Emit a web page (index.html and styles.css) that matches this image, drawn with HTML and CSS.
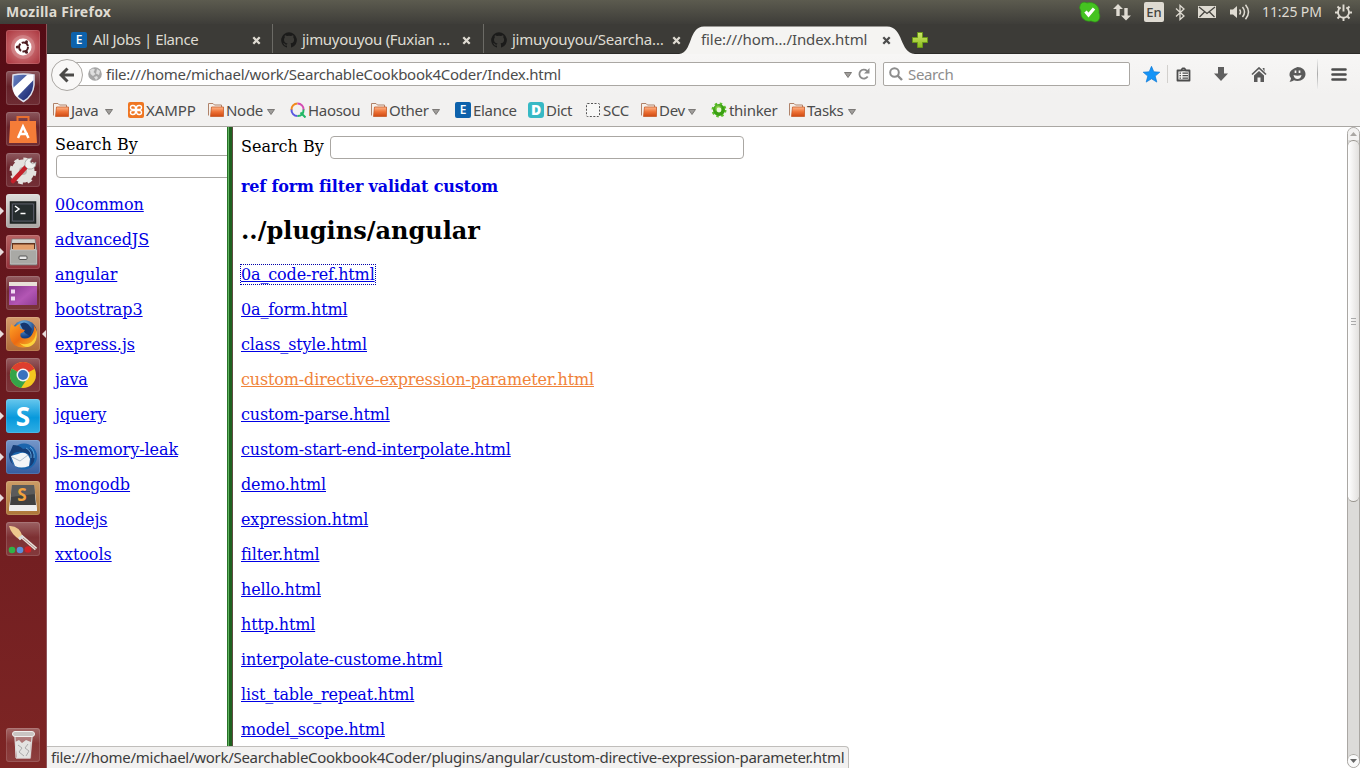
FILE: index.html
```html
<!DOCTYPE html>
<html lang="en">
<head>
<meta charset="utf-8">
<title>Index.html</title>
<link rel="stylesheet" href="styles.css">
</head>
<body>
<svg class="defs" width="0" height="0">
<defs>
<linearGradient id="gOrange" x1="0" y1="0" x2="0" y2="1"><stop offset="0" stop-color="#ffb88c"/><stop offset=".5" stop-color="#ee7236"/><stop offset="1" stop-color="#cf4a12"/></linearGradient>
<linearGradient id="gGreen" x1="0" y1="0" x2="0" y2="1"><stop offset="0" stop-color="#cfe86a"/><stop offset="1" stop-color="#8abb1c"/></linearGradient>
<linearGradient id="gBlue" x1="0" y1="0" x2="1" y2="1"><stop offset="0" stop-color="#6b87c8"/><stop offset="1" stop-color="#131c66"/></linearGradient>
<linearGradient id="gPurple" x1="0" y1="0" x2="1" y2="1"><stop offset="0" stop-color="#7d2f86"/><stop offset=".6" stop-color="#b356b4"/><stop offset="1" stop-color="#8f3c93"/></linearGradient>
<linearGradient id="gSteel" x1="0" y1="0" x2="0" y2="1"><stop offset="0" stop-color="#d8d8d4"/><stop offset="1" stop-color="#8d8d89"/></linearGradient>
<linearGradient id="gFire" x1="0" y1="0" x2="1" y2="1"><stop offset="0" stop-color="#ffa426"/><stop offset=".5" stop-color="#ec6a12"/><stop offset="1" stop-color="#f8c62a"/></linearGradient>
<radialGradient id="gGlobe" cx=".45" cy=".2"><stop offset="0" stop-color="#7cc4f2"/><stop offset="1" stop-color="#123f86"/></radialGradient>
<radialGradient id="gLime" cx=".4" cy=".3"><stop offset="0" stop-color="#b8f06c"/><stop offset="1" stop-color="#3aa012"/></radialGradient>
<symbol id="folder" viewBox="0 0 16 16"><path d="M.5 13.500V1.500H5l1.500 1.500H13.500v10" fill="#f6f1ec" stroke="#b0836a"/><path d="M3.500 5H15.500V14.500H2.500z" fill="url(#gOrange)" stroke="#c65a28" stroke-width=".8"/></symbol>
<symbol id="cat" viewBox="0 0 16 16"><path d="M8 .3a7.800 7.800 0 0 0-2.500 15.200c.4.100.5-.2.500-.4v-1.500c-2.200.5-2.700-.9-2.700-.9-.4-.9-.9-1.200-.9-1.200-.7-.5.100-.5.100-.5.800.100 1.200.8 1.200.8.700 1.200 1.900.9 2.300.7.100-.5.300-.9.500-1.100C4.800 11.200 3 10.500 3 7.500c0-.8.300-1.500.8-2.100-.100-.2-.4-1 .100-2.100 0 0 .7-.2 2.200.8a7.500 7.500 0 0 1 3.900 0c1.500-1 2.200-.8 2.200-.8.4 1.100.200 1.900.100 2.100.5.600.8 1.300.8 2.100 0 3.100-1.900 3.700-3.600 3.900.3.300.5.800.5 1.500v2.200c0 .2.100.5.500.4A7.800 7.800 0 0 0 8 .3z" fill="#1b1b1a"/></symbol>
<symbol id="close" viewBox="0 0 9 9"><path d="M1.300 1.300 7.700 7.700M7.700 1.300 1.300 7.700" stroke="currentColor" stroke-width="2.300"/></symbol>
<symbol id="arrow" viewBox="0 0 8 6"><path d="M.5.500h7L4 5.500z" fill="#a09e9b" stroke="#73716e" stroke-width=".9"/></symbol>
</defs>
</svg>

<header class="panel">
  <span class="panel-title">Mozilla Firefox</span>
  <div class="indicators">
    <svg class="i-skype" width="22" height="22" viewBox="0 0 22 22"><path d="M1 5C1 2 5 0 8 2c8-2 13 4 12 10 2 4 0 9-4 9-2 0-3-1-4-1C6 21 1 17 2 10 1 8 0 7 1 5z" fill="#45c321" stroke="#2c9614" stroke-width=".7"/><path d="M6.500 10.500 9.500 14 15 7.500" fill="none" stroke="#fff" stroke-width="3.200"/></svg>
    <svg class="i-net" width="18" height="17" viewBox="0 0 18 17"><path d="M5 0 10 5H6.700V12H3.300V5H0zM13 16.500 8 11.500h3.300V4h3.400v7.500H18z" fill="#dfdbd2"/></svg>
    <span class="i-lang">En</span>
    <svg class="i-bt" width="10" height="17" viewBox="0 0 10 17"><path d="M1 4.500 9 12 5 15.500V1.500L9 5 1 12.500" fill="none" stroke="#dfdbd2" stroke-width="1.300"/></svg>
    <svg class="i-mail" width="18" height="12" viewBox="0 0 18 12"><path d="M0 0h18v12H0z" fill="#dfdbd2"/><path d="M1 1l8 6.500L17 1M1.500 11 6.500 6M16.500 11l-5-5" fill="none" stroke="#45443f" stroke-width="1.300"/></svg>
    <svg class="i-vol" width="20" height="16" viewBox="0 0 20 16"><path d="M0 5.500h3L7 2v12L3 10.500H0z" fill="#dfdbd2"/><path d="M9.500 5.500q2 2.500 0 5M12.500 3q4 5 0 10M15.500.7q6 7.300 0 14.600" fill="none" stroke="#dfdbd2" stroke-width="1.500"/></svg>
    <span class="clock">11:25 PM</span>
    <svg class="i-gear" width="17" height="17" viewBox="0 0 17 17"><path d="M5.700 3.500a5.500 5.500 0 1 0 5.600 0" fill="none" stroke="#dfdbd2" stroke-width="1.800"/><path d="M8.500.5v7M2.500 2.500 4.500 4.500M14.500 2.500l-2 2M0 8.500h3M14 8.500h3M2.500 14.500l2-2M14.500 14.500l-2-2M8.500 14v3" stroke="#dfdbd2" stroke-width="1.900"/></svg>
  </div>
</header>

<div class="desktop">
<nav class="launcher">
  <div class="tile dash"><svg width="34" height="34" viewBox="0 0 34 34"><circle cx="17" cy="17" r="12" fill="#fff" opacity=".18"/><circle cx="17" cy="17" r="8.500" fill="#fff"/><circle cx="17.500" cy="17" r="4.500" fill="none" stroke="#4d1c20" stroke-width="2" stroke-dasharray="8 1.420"/><g fill="#4d1c20"><circle cx="11.300" cy="17" r="1.500"/><circle cx="20.500" cy="11.700" r="1.500"/><circle cx="20.500" cy="22.300" r="1.500"/></g></svg></div>
  <div class="tile"><svg width="34" height="34" viewBox="0 0 34 34"><path d="M7 4Q17 2 28 4V14Q27 25 17.500 30.500 7 25 6.500 14z" fill="url(#gBlue)" stroke="#dfe2ec" stroke-width="1.500"/><path d="M7 17 21 4h6.500v5L11 26Q7 22 7 17z" fill="#fff"/></svg></div>
  <div class="tile"><svg width="34" height="34" viewBox="0 0 34 34"><path d="M11.500 9V5h11v4" fill="none" stroke="#e96f2f" stroke-width="2"/><path d="M4 9H30V14L31 31H3L4 14z" fill="#f47c38"/><path d="M12 26 17 14.500 22.500 26M13 22h9" fill="none" stroke="#fff" stroke-width="2.500"/></svg></div>
  <div class="tile"><svg width="34" height="34" viewBox="0 0 34 34"><circle cx="17" cy="18" r="9.500" fill="#e4e2df" stroke="#e4e2df" stroke-width="4"/><circle cx="17" cy="18" r="11.700" fill="none" stroke="#e4e2df" stroke-width="3.500" stroke-dasharray="4.600 4.590"/><circle cx="17" cy="18" r="4" fill="#b8b5b1"/><path d="M7 28 20 14" stroke="#c4202a" stroke-width="4.500" stroke-linecap="round"/><path d="M19 13q-1-8 7-8l-2 4 3 2 3-2q0 8-8 7z" fill="#efefed" stroke="#999" stroke-width=".7"/></svg></div>
  <div class="tile light running"><svg width="34" height="34" viewBox="0 0 34 34"><path d="M4.500 8h25v21h-25z" fill="#33393a" stroke="#1c2020" stroke-width="1.500"/><path d="M6.500 10h21v17h-21z" fill="#262d2e" stroke="#667" stroke-width=".7"/><path d="M9 12l4 3-4 3M14.500 19.500h5" fill="none" stroke="#fff" stroke-width="1.500"/></svg></div>
  <div class="tile files running"><svg width="34" height="34" viewBox="0 0 34 34"><path d="M6 4h23l2 12v14H4V16z" fill="url(#gSteel)" stroke="#777" stroke-width=".7"/><path d="M6 8h23v6H6z" fill="#60321e"/><path d="M7 9.500h21v6H7z" fill="#e3a06e"/><path d="M4.500 15h26v14h-26z" fill="#a9a9a5" stroke="#ccc" stroke-width=".6"/><rect x="13" y="21" width="8" height="3.500" rx="1" fill="#e8e8e8" stroke="#555"/></svg></div>
  <div class="tile"><svg width="34" height="34" viewBox="0 0 34 34"><path d="M3 6h28v23H3z" fill="url(#gPurple)"/><path d="M3 6h28v4H3z" fill="#e8e1d9"/><path d="M5 13.500h4v4H5zM5 20.500h4v4H5z" fill="#f1d9f1"/></svg></div>
  <div class="tile fox running focused"><svg width="34" height="34" viewBox="0 0 34 34"><circle cx="18.500" cy="15.500" r="12.300" fill="url(#gGlobe)"/><path d="M14 7q4-3 8 0l4 5-2 7-5-3-3-5z" fill="#15366f"/><path d="M5.500 7q1.500 2.500 4 2.500 2.500-3 5-2.500-2 3 .5 5l4 1q-1 2.500-4.500 3.500-1 5 4.500 5 5 0 7-4 3-5 1.500-9.500 5 5.500 3 12.500Q26.500 30.500 17 30.500 5.500 30 4 20q-1-7 1.500-13z" fill="url(#gFire)"/><path d="M29.500 11q2 9-4 14-6 4-12 1 8 8 15 0 4-6 1-15z" fill="#fbd23c"/></svg></div>
  <div class="tile"><svg width="34" height="34" viewBox="0 0 34 34"><circle cx="17" cy="17" r="13" fill="#f4c81f"/><path d="M17 17 5.700 10.500A13 13 0 0 1 28.500 11z" fill="#dd3e2e"/><path d="M17 17 5.700 10.500A13 13 0 0 0 15 30l6-9z" fill="#35a449"/><circle cx="17" cy="17" r="6.500" fill="#f3f3f3"/><circle cx="17" cy="17" r="5" fill="#3972bf"/></svg></div>
  <div class="tile skype running"><span>S</span></div>
  <div class="tile bird running"><svg width="34" height="34" viewBox="0 0 34 34"><circle cx="18" cy="16.500" r="13" fill="#1b65ad"/><path d="M7 5q6 0 10 4 8-2 11 6 2 8-5 12 4-9-1-13-7-4-14-1Q3 17 7 25q-7-8-2-15z" fill="#163e78"/><path d="M5 16q3-1 7-2 6-3 10 1l2 4-1 7q-8 3-14 0z" fill="#f2f5f8"/><path d="M6 17l8 4 8-6" stroke="#aebdcc" fill="none"/><path d="M20 8q6 3 5 10M24 7q5 4 4 11" stroke="#5ea4dc" fill="none"/></svg></div>
  <div class="tile sublime running"><svg width="34" height="34" viewBox="0 0 34 34"><path d="M6 4h22l3 23v3H3v-3z" fill="#eee"/><path d="M6 4h22l2 20H4z" fill="#414141"/><path d="M6 4h22l1 9-24 3z" fill="#5b5b5b"/><text x="11.300" y="19.500" class="sub-s">S</text></svg></div>
  <div class="tile"><svg width="34" height="34" viewBox="0 0 34 34"><path d="M15 14 30 27" stroke="#e9e1d8" stroke-width="3.500"/><path d="M17 16l13 11" stroke="#a88" stroke-width="1"/><path d="M3 4q10-1 14 11l-3 3Q5 12 3 4z" fill="#edc78d"/><path d="M13 17l4-3" stroke="#d9d9d9" stroke-width="3"/><circle cx="6" cy="28" r="3.300" fill="#31b246"/><circle cx="14" cy="28" r="3.300" fill="#5b8ed8"/><circle cx="22" cy="27.500" r="3.300" fill="#cf2227"/></svg></div>
  <div class="tile trash"><svg width="34" height="34" viewBox="0 0 34 34"><path d="M8 6h19l-2 25H10z" fill="#fff" opacity=".3"/><path d="M9 14l4-2 3 3 4-3 5 2-1 16H11z" fill="#e3e3e1"/><path d="M12 17l4 3-3 4 5 4M22 16l-3 4 4 3-3 5" stroke="#aaa" fill="none"/><rect x="6.500" y="3.500" width="22" height="5" rx="2.500" fill="#c9c4c2" stroke="#f1efee"/><path d="M9 9l1 21h14l2-21" fill="none" stroke="#ddd"/></svg></div>
</nav>

<main class="browser">
  <div class="tabs">
    <div class="tab first"><span class="fav-e">E</span><span class="tab-text all-jobs">All Jobs | Elance</span><svg class="x" width="9" height="9"><use href="#close"/></svg></div>
    <div class="tab second"><svg class="fav" width="16" height="16"><use href="#cat"/></svg><span class="tab-text fuxian">jimuyouyou (Fuxian …</span><svg class="x" width="9" height="9"><use href="#close"/></svg></div>
    <div class="tab third"><svg class="fav" width="16" height="16"><use href="#cat"/></svg><span class="tab-text searcha">jimuyouyou/Searcha…</span><svg class="x" width="9" height="9"><use href="#close"/></svg></div>
    <div class="tab active"><svg class="tab-shape" width="236" height="28" viewBox="0 0 236 28"><path d="M0 28C14 27 9 .5 25 .5H208C225 .5 220 27 236 28z" fill="#f5f4f2"/></svg><span class="tab-text current">file:///hom…/Index.html</span><svg class="x" width="9" height="9"><use href="#close"/></svg></div>
    <svg class="plus" width="16" height="16" viewBox="0 0 16 16"><path d="M5.500.5h5v5h5v5h-5v5h-5v-5h-5v-5h5z" fill="url(#gGreen)" stroke="#6a9918"/></svg>
  </div>

  <div class="navbar">
    <div class="back"><svg width="16" height="16" viewBox="0 0 16 16"><path d="M8.500 1.500 2 8l6.500 6.500M3 8h12" fill="none" stroke="#4b4a48" stroke-width="3"/></svg></div>
    <div class="url">
      <svg class="globe" width="14" height="14" viewBox="0 0 14 14"><circle cx="7" cy="7" r="6.800" fill="#a6a6a6"/><path d="M2 3l3-1.500 2 1L5.500 5l2 2L5 9 2.500 7zM9 2l3 2-1 4-3-1.500zM6 10l3-1 1 2-2 2z" fill="#dedede"/></svg>
      <span class="url-text">file:///home/michael/work/SearchableCookbook4Coder/Index.html</span>
      <svg class="url-arrow" width="8" height="6"><use href="#arrow"/></svg>
      <svg class="reload" width="12" height="12" viewBox="0 0 12 12"><path d="M9.700 8.500A4.500 4.500 0 1 1 9 2.800" fill="none" stroke="#8c8c8c" stroke-width="1.800"/><path d="M11.500 0v5.500H6z" fill="#8c8c8c"/></svg>
    </div>
    <div class="search"><svg width="14" height="14" viewBox="0 0 14 14"><circle cx="5.500" cy="5.500" r="4.300" fill="none" stroke="#8d8d8d" stroke-width="2"/><path d="M8.500 8.500 13 13" stroke="#8d8d8d" stroke-width="2.400"/></svg><span>Search</span></div>
    <div class="tools">
      <svg class="t-star" width="17" height="17" viewBox="0 0 17 17"><path d="M8.500.3l2.300 5.500 6 .4-4.600 3.900 1.600 6-5.300-3.300-5.300 3.300 1.600-6L.2 6.200l6-.4z" fill="#1494f7" stroke="#0d79d6" stroke-width=".7"/></svg>
      <i class="div-a"></i>
      <svg class="t-list" width="15" height="15" viewBox="0 0 15 15"><path d="M1.500 3.500h3.500L6.500 1.500h2L10 3.500h3.500v10h-12z" fill="#f5f4f2" stroke="#4c4c4c" stroke-width="1.800" stroke-linejoin="round"/><path d="M3.500 6.200H5M6.500 6.200h5.500M3.500 8.700H5M6.500 8.700h5.500M3.500 11.200H5M6.500 11.200h5.500M5 3.500h5" stroke="#4c4c4c" stroke-width="1.300"/></svg>
      <svg class="t-down" width="14" height="14" viewBox="0 0 14 14"><path d="M4 0h6v6.500h4L7 14 0 6.500h4z" fill="#5f5f5f"/></svg>
      <svg class="t-home" width="16" height="15" viewBox="0 0 16 15"><path d="M1 7.500 8 1l7 6.500" fill="none" stroke="#5a5a5a" stroke-width="1.700"/><path d="M3 8.500l5-4.500L13 8.500V15H9.500v-4.500h-3V15H3zM11.500 1h2v4z" fill="#5a5a5a"/></svg>
      <svg class="t-chat" width="17" height="15" viewBox="0 0 17 15"><path d="M8.500 0C13 0 16.500 3 16.500 7S13 14 8.500 14q-2 0-3.500-.7Q3 15 .5 14.700 2 13 2 11.300 0 9.500.5 7 .5 3 8.500 0z" fill="#5a5a5a"/><path d="M4.500 8q4 1.500 8 0-.7 4-4 4t-4-4z" fill="#f5f4f2"/><path d="M6.500 3.500v2.500M10.500 3.500v2.500" stroke="#f5f4f2" stroke-width="1.700"/></svg>
      <i class="div-b"></i>
      <svg class="t-menu" width="16" height="13" viewBox="0 0 16 13"><path d="M1.500 1.500h13M1.500 6.500h13M1.500 11.500h13" stroke="#4c4c4c" stroke-width="2.600" stroke-linecap="round"/></svg>
    </div>
  </div>

  <div class="bookmarks">
    <div class="bm b-java"><svg width="16" height="16"><use href="#folder"/></svg><span>Java</span><svg class="dd" width="8" height="6"><use href="#arrow"/></svg></div>
    <div class="bm b-xampp"><svg width="16" height="16" viewBox="0 0 16 16"><rect width="16" height="16" rx="2" fill="#ef7622"/><path d="M5 3.500h-.5a2 2 0 0 0 0 4h7a2 2 0 0 0 0-4H11Q8.500 3.500 8.500 6v3.500Q8.500 12.500 11 12.500h.5a2 2 0 0 0 0-4h-7a2 2 0 0 0 0 4H5Q7.500 12.500 7.500 10V6Q7.500 3.500 5 3.500z" fill="none" stroke="#fff" stroke-width="1.400"/></svg><span>XAMPP</span></div>
    <div class="bm b-node"><svg width="16" height="16"><use href="#folder"/></svg><span>Node</span><svg class="dd" width="8" height="6"><use href="#arrow"/></svg></div>
    <div class="bm b-haosou"><svg width="16" height="16" viewBox="0 0 16 16" fill="none" stroke-width="2"><path d="M7.500 1.500A6 6 0 0 0 1.500 8" stroke="#f18a1c"/><path d="M7.500 1.500A6 6 0 0 1 13.600 8" stroke="#d44bb2"/><path d="M1.500 7.500A6 6 0 0 0 7.500 14" stroke="#5a58e0"/><path d="M13.600 7.500Q13.500 14 7.500 14M10.500 10.500l5 5" stroke="#22b765"/></svg><span>Haosou</span></div>
    <div class="bm b-other"><svg width="16" height="16"><use href="#folder"/></svg><span>Other</span><svg class="dd" width="8" height="6"><use href="#arrow"/></svg></div>
    <div class="bm b-elance"><b class="fav-e">E</b><span>Elance</span></div>
    <div class="bm b-dict"><b class="fav-d">D</b><span>Dict</span></div>
    <div class="bm b-scc"><svg width="16" height="16" viewBox="0 0 16 16"><rect x="1.500" y="1.500" width="13" height="13" rx="1" fill="#f8f8f7" stroke="#555" stroke-dasharray="2 1.500"/></svg><span>SCC</span></div>
    <div class="bm b-dev"><svg width="16" height="16"><use href="#folder"/></svg><span>Dev</span><svg class="dd" width="8" height="6"><use href="#arrow"/></svg></div>
    <div class="bm b-thinker"><svg width="16" height="16" viewBox="0 0 16 16"><circle cx="8" cy="8" r="6.500" fill="none" stroke="#5cc02a" stroke-width="2" stroke-dasharray="2.500 2.600"/><circle cx="8" cy="8" r="4.200" fill="#e9f7dc" stroke="url(#gLime)" stroke-width="3.600"/></svg><span>thinker</span></div>
    <div class="bm b-tasks"><svg width="16" height="16"><use href="#folder"/></svg><span>Tasks</span><svg class="dd" width="8" height="6"><use href="#arrow"/></svg></div>
  </div>

  <div class="frames">
    <section class="frame-left">
      <div class="label">Search By</div>
      <div class="field"></div>
      <p><a>00common</a></p><p><a>advancedJS</a></p><p><a>angular</a></p><p><a>bootstrap3</a></p><p><a>express.js</a></p><p><a>java</a></p><p><a>jquery</a></p><p><a>js-memory-leak</a></p><p><a>mongodb</a></p><p><a>nodejs</a></p><p><a>xxtools</a></p>
    </section>
    <div class="splitter"></div>
    <section class="frame-right">
      <div class="query"><span>Search By</span><div class="field"></div></div>
      <p class="terms">ref form filter validat custom</p>
      <h2>../plugins/angular</h2>
      <p><a class="focus">0a_code-ref.html</a></p><p><a>0a_form.html</a></p><p><a>class_style.html</a></p><p><a class="hover">custom-directive-expression-parameter.html</a></p><p><a>custom-parse.html</a></p><p><a>custom-start-end-interpolate.html</a></p><p><a>demo.html</a></p><p><a>expression.html</a></p><p><a>filter.html</a></p><p><a>hello.html</a></p><p><a>http.html</a></p><p><a>interpolate-custome.html</a></p><p><a>list_table_repeat.html</a></p><p><a>model_scope.html</a></p>
    </section>
    <div class="scrollbar"><div class="sb-up"><svg width="7" height="4"><path d="M0 4 3.500 0 7 4z" fill="#aaa7a3"/></svg></div><div class="sb-thumb"><i></i><i></i><i></i></div><div class="sb-rest"></div><div class="sb-down"><svg width="7" height="4"><path d="M0 0h7L3.500 4z" fill="#666"/></svg></div></div>
    <div class="status"><span>file:///home/michael/work/SearchableCookbook4Coder/plugins/angular/custom-directive-expression-parameter.html</span></div>
  </div>
</main>
</div>
</body>
</html>
```
FILE: styles.css
```css
* { box-sizing: border-box; }
body { margin: 0; width: 1360px; height: 768px; overflow: hidden; display: flex; flex-direction: column; background: #fff; font: 15px "Noto Sans", sans-serif; color: #4c4c4c; white-space: nowrap; }
svg { display: block; flex: none; }
.defs { position: absolute; }
.panel { height: 24px; flex: none; display: flex; align-items: center; justify-content: space-between; padding: 0 8px 0 6px; background: linear-gradient(#5c5b4f, #3e3d39); color: #dfdbd2; }
.panel-title { padding-bottom: 2px; font-size: 14px; font-weight: 700; letter-spacing: .25px; }
.indicators { display: flex; align-items: center; }
.i-net { margin-left: 12px; }
.i-lang { width: 20px; height: 20px; margin-left: 13px; border-radius: 2px; background: #dfdbd2; color: #45443f; font-size: 13px; font-weight: 500; line-height: 20px; text-align: center; }
.i-bt { margin-left: 11px; }
.i-mail { margin-left: 13px; }
.i-vol { margin-left: 14px; }
.clock { width: 60px; margin-left: 12px; padding-bottom: 1px; font-size: 14px; letter-spacing: -.1px; }
.i-gear { margin-left: 13px; }

.desktop { flex: 1; min-height: 0; display: flex; }
.launcher { width: 47px; flex: none; display: flex; flex-direction: column; gap: 7px; padding: 6px 0 6px 6px; background: linear-gradient(#540b14, #64161d 30%, #7d2524); border-right: 1px solid #91545a; }
.tile { width: 34px; height: 34px; flex: none; border-radius: 3px; background: linear-gradient(rgba(255,255,255,.3), rgba(255,255,255,.08) 45%, rgba(255,255,255,.12)); box-shadow: inset 0 0 0 1px rgba(255,255,255,.13); position: relative; }
.tile.dash { background: radial-gradient(#dc8b8d, #a8323b); }
.tile.light { background: linear-gradient(#dedddb, #aaa6a4); }
.tile.files { background: linear-gradient(#b86263, #93313a); }
.tile.fox { background: linear-gradient(#d59c6c, #b06b38); }
.tile.skype { background: linear-gradient(#67c7ed, #0799dc 55%, #30aee4); color: #fff; text-align: center; font: 700 26px/34px "Open Sans", sans-serif; }
.tile.bird { background: linear-gradient(#7597c9, #355c9f); }
.tile.sublime { background: linear-gradient(#cc9c66, #ad7739); }
.sub-s { font: 700 17px "Open Sans", sans-serif; fill: #f2a23d; }
.tile.trash { margin-top: auto; }
.running::before, .focused::after { content: ""; position: absolute; top: 13px; border: 4px solid transparent; }
.running::before { left: -6px; border-width: 4px 0 4px 4px; border-left-color: #e8dcdc; }
.focused::after { right: -6px; border-width: 4px 4px 4px 0; border-right-color: #e8dcdc; }

.browser { flex: 1; min-width: 0; display: flex; flex-direction: column; background: #f2f1f0; }
.tabs { height: 30px; flex: none; display: flex; align-items: center; background: #3c3b37; color: #dfdbd2; border-bottom: 1px solid #2c2b28; }
.tab { height: 29px; display: flex; align-items: center; padding-top: 3px; }
.tab .x { margin-left: auto; }
.first { width: 226px; padding-left: 24px; padding-right: 11px; border-right: 1px solid #6c6b66; }
.second { width: 211px; padding-left: 8px; padding-right: 12px; border-right: 1px solid #6c6b66; }
.third { width: 198px; padding-left: 7px; }
.third .x { margin-right: 1px; }
.fav-e, .fav-d { width: 16px; height: 16px; flex: none; background: #0d62ac; border-radius: 2px; color: #fff; font: 600 12px/16px "Open Sans", sans-serif; text-align: center; }
.fav-d { background: #37b9c5; font-weight: 800; font-size: 14px; border-radius: 3px; }
.fav-e + .tab-text { margin-left: 6px; }
.fav + .tab-text { margin-left: 5px; }
.tab-text { margin-top: -2px; letter-spacing: -.3px; }
.all-jobs { letter-spacing: -.42px; }
.searcha { letter-spacing: -.25px; }
.current { letter-spacing: -.08px; }
.active { position: relative; width: 232px; padding-left: 19px; padding-right: 23px; color: #4c4c4c; }
.tab-shape { position: absolute; left: -3px; top: 2px; }
.active .tab-text, .active .x { position: relative; }
.plus { margin: 3px 0 0 -2px; }

.navbar { height: 41px; flex: none; display: flex; align-items: center; padding-left: 4px; background: linear-gradient(#f7f6f5, #f2f1f0); }
.back { position: relative; z-index: 1; width: 32px; height: 32px; flex: none; margin-right: -16px; border: 1px solid #aaa7a3; border-radius: 50%; background: #f9f8f7; display: grid; place-items: center; }
.url { width: 809px; height: 24px; margin-top: -1px; display: flex; align-items: center; padding: 0 5px 0 20px; border: 1px solid #aaa7a3; border-radius: 2px; background: #fff; }
.url-text { margin-left: 4px; padding-bottom: 1px; letter-spacing: -.27px; }
.url-arrow { margin: 2px 0 0 auto; }
.reload { margin-left: 6px; }
.search { width: 247px; height: 24px; margin: -1px 0 0 7px; padding-left: 5px; display: flex; align-items: center; gap: 5px; border: 1px solid #aaa7a3; border-radius: 2px; background: #fff; color: #8d8d8d; }
.search span { padding-bottom: 1px; letter-spacing: -.35px; }
.tools { display: flex; align-items: center; margin: -1px 0 0 -1px; }
.t-star { margin-left: 14px; }
.div-a { width: 1px; height: 18px; margin-left: 7px; background: #d2d0cd; }
.t-list { margin-left: 8px; }
.t-down { margin-left: 23px; }
.t-home { margin-left: 23px; }
.t-chat { margin-left: 22px; }
.div-b { width: 1px; height: 30px; margin-left: 11px; background: linear-gradient(#eee, #aaa, #eee); }
.t-menu { margin-left: 13px; }

.bookmarks { height: 32px; flex: none; display: flex; align-items: center; padding-left: 6px; border-bottom: 1px solid #aaa7a3; }
.bm { display: flex; align-items: center; gap: 2px; height: 31px; flex: none; letter-spacing: -.3px; }
.bm svg, .bm b { margin-top: -1px; }
.bm span { padding-bottom: 1px; }
.bm svg.dd { margin: 2px 15px 0 auto; }
.b-java { width: 75px; } .b-xampp { width: 80px; letter-spacing: -.05px; } .b-node { width: 82px; } .b-haosou { width: 81px; } .b-other { width: 84px; } .b-elance { width: 73px; } .b-dict { width: 57px; } .b-scc { width: 56px; } .b-dev { width: 70px; } .b-thinker { width: 78px; } .b-tasks { width: 82px; }

.frames { position: relative; flex: 1; min-height: 0; display: flex; background: #fff; color: #000; font: 16px/19px "DejaVu Serif", serif; }
.frames p { margin: 0 0 16px; }
.frames a { color: #0000e4; text-decoration: underline; letter-spacing: -.15px; }
.frames .frame-left a { letter-spacing: -.06px; }
.frames a.hover { color: #f0833a; }
.frames a.focus { outline: 1px dotted #0000aa; }
.field { height: 24px; border: 1px solid #aaa7a3; border-radius: 4px; background: #fff; }
.frame-left { width: 180px; flex: none; overflow: hidden; padding: 8px; }
.frame-left .field { width: 200px; height: 23px; margin: 1px 0 17px 1px; }
.splitter { width: 6px; flex: none; background: linear-gradient(90deg, #277327 0 1px, #62b462 1px 2px, #1f611f 2px 5px, #5d4b40 5px); }
.frame-right { flex: 1; overflow: hidden; padding: 9px 8px 0; }
.query { display: flex; align-items: center; margin-bottom: 18px; height: 23px; }
.query span { padding-bottom: 2px; }
.query .field { width: 414px; height: 23px; margin-left: auto; margin-right: 595px; flex: none; }
.frame-right .terms { font-weight: 700; color: #0000e4; margin-bottom: 20px; letter-spacing: -.16px; }
.frames h2 { margin: 0 0 20px; font-size: 24px; line-height: 29px; }
.scrollbar { width: 13px; flex: none; display: flex; flex-direction: column; background: #dcdbd9; border: 1px solid #aaa7a3; border-radius: 7px; overflow: hidden; }
.sb-up, .sb-down { height: 12px; flex: none; display: grid; place-items: center; background: #f3f2f1; }
.sb-thumb { height: 362px; flex: none; display: flex; flex-direction: column; align-items: center; justify-content: center; gap: 2px; background: linear-gradient(90deg, #fff, #e2e0de); border: solid #99958f; border-width: 1px 0; border-radius: 6px; }
.sb-thumb i { width: 5px; height: 1px; background: #aaa; }
.sb-rest { flex: 1; }
.sb-down { height: 13px; border-top: 1px solid #aaa7a3; border-radius: 6px; background: #fafafa; }
.status { position: absolute; left: 0; bottom: 0; width: 802px; height: 22px; padding-left: 4px; border: 1px solid #c0bebb; border-width: 1px 1px 0 0; border-radius: 0 4px 0 0; background: #f2f1f0; color: #3c3c3c; font: 15px/21px "Noto Sans", sans-serif; letter-spacing: -.285px; }
```
